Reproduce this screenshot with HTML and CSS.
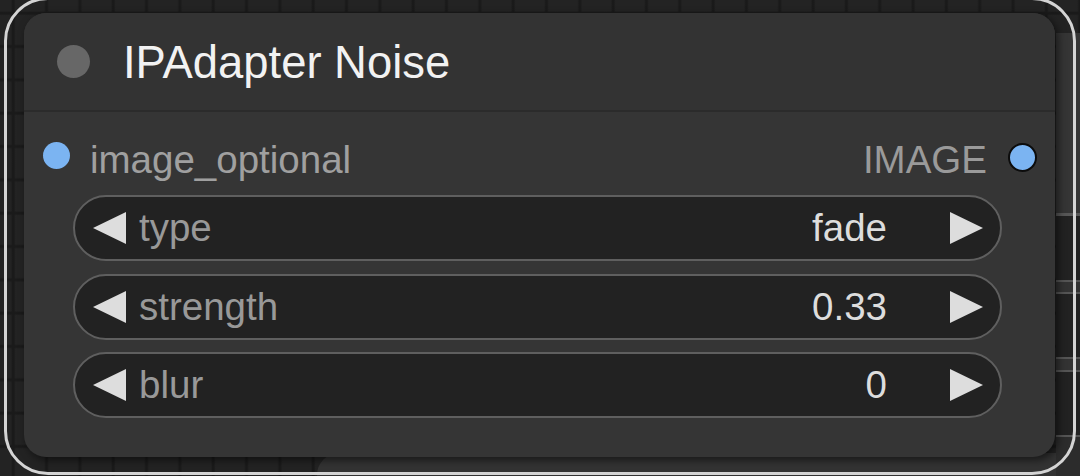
FILE: index.html
```html
<!DOCTYPE html>
<html lang="en">
<head>
<meta charset="utf-8">
<title>IPAdapter Noise</title>
<link rel="stylesheet" href="styles.css">
</head>
<body>
<div class="canvas">
  <div class="bg-node bg-node-bottom"></div>
  <div class="bg-node bg-node-right"></div>
  <div class="selection">
    <div class="node">
      <div class="node-title">
        <span class="title-dot"></span>
        <span class="title-text">IPAdapter Noise</span>
      </div>
      <div class="node-body">
        <div class="slot-row">
          <div class="slot slot-in">
            <span class="dot dot-in"></span>
            <span class="slot-label">image_optional</span>
          </div>
          <div class="slot slot-out">
            <span class="slot-label">IMAGE</span>
            <span class="dot dot-out"></span>
          </div>
        </div>
        <div class="widgets">
          <div class="widget">
            <svg class="arrow" viewBox="0 0 33 32"><polygon points="33,0 0,16 33,32"/></svg>
            <span class="w-label">type</span>
            <span class="w-value">fade</span>
            <svg class="arrow arrow-r" viewBox="0 0 33 32"><polygon points="0,0 33,16 0,32"/></svg>
          </div>
          <div class="widget">
            <svg class="arrow" viewBox="0 0 33 32"><polygon points="33,0 0,16 33,32"/></svg>
            <span class="w-label">strength</span>
            <span class="w-value">0.33</span>
            <svg class="arrow arrow-r" viewBox="0 0 33 32"><polygon points="0,0 33,16 0,32"/></svg>
          </div>
          <div class="widget">
            <svg class="arrow" viewBox="0 0 33 32"><polygon points="33,0 0,16 33,32"/></svg>
            <span class="w-label">blur</span>
            <span class="w-value">0</span>
            <svg class="arrow arrow-r" viewBox="0 0 33 32"><polygon points="0,0 33,16 0,32"/></svg>
          </div>
        </div>
      </div>
    </div>
  </div>
</div>
</body>
</html>
```
FILE: styles.css
```css
html, body {
  margin: 0;
  padding: 0;
  width: 1080px;
  height: 476px;
  overflow: hidden;
}

body {
  font-family: "Liberation Sans", Arial, sans-serif;
  background-color: #232323;
  background-image:
    linear-gradient(90deg, transparent 0, #1a1a1a 1.5px, #1a1a1a 3px, transparent 4.5px),
    linear-gradient(180deg, transparent 0, #1a1a1a 1.5px, #1a1a1a 3px, transparent 4.5px);
  background-size: 33.33px 33.33px;
  background-position: 11px 11px;
}

.canvas {
  position: relative;
  width: 1080px;
  height: 476px;
  overflow: hidden;
}

/* other nodes lying behind on the canvas */
.bg-node {
  position: absolute;
  z-index: 0;
}

.bg-node-bottom {
  left: 317px;
  top: 453px;
  width: 760px;
  height: 40px;
  border-radius: 22px 0 0 0;
  background: #333333;
}

.bg-node-right {
  left: 1056px;
  top: 33px;
  width: 24px;
  height: 443px;
  background: linear-gradient(180deg,
    #353535 0, #353535 180px,
    #575757 180px, #575757 183px,
    #222222 183px, #222222 247px,
    #555555 247px, #555555 249px,
    #333333 249px, #333333 259px,
    #555555 259px, #555555 261px,
    #222222 261px, #222222 324px,
    #555555 324px, #555555 326px,
    #333333 326px, #333333 337px,
    #555555 337px, #555555 339px,
    #222222 339px, #222222 402px,
    #555555 402px, #555555 404px,
    #2c2c2c 404px);
}

.selection {
  position: relative;
  z-index: 1;
  box-sizing: border-box;
  width: 1072px;
  height: 478px;
  margin: -3px 0 0 4px;
  padding: 13px 0 0 17px;
  border: 3px solid #d4d4d4;
  border-radius: 44px;
}

.node {
  width: 1031px;
  height: 444px;
  border-radius: 22px;
  background: #353535;
  box-shadow: 3px 3px 8px rgba(0, 0, 0, 0.55);
  overflow: hidden;
}

.node-title {
  display: flex;
  align-items: center;
  box-sizing: border-box;
  height: 99px;
  padding: 2px 0 0 33px;
  background: #333333;
  border-bottom: 2px solid #2b2b2b;
}

.title-dot {
  width: 33px;
  height: 33px;
  border-radius: 50%;
  background: #676767;
  flex: none;
  margin-top: -2px;
}

.title-text {
  margin-left: 33px;
  font-size: 45.4px;
  color: #f2f2f2;
  white-space: nowrap;
}

.slot-row {
  display: flex;
  justify-content: space-between;
  height: 83px;
  padding: 0 18px 0 19px;
}

.slot {
  display: flex;
  align-items: flex-start;
}

.dot {
  flex: none;
  border-radius: 50%;
  background: #7bb4f2;
}

.dot-in {
  width: 27px;
  height: 27px;
  margin-top: 30px;
  margin-right: 20px;
}

.dot-out {
  box-sizing: border-box;
  width: 29px;
  height: 29px;
  margin-top: 30.5px;
  margin-left: 21px;
  border: 2.5px solid #0c0c0c;
}

.slot-label {
  font-size: 38.5px;
  line-height: 38px;
  margin-top: 29px;
  color: #a0a0a0;
  white-space: nowrap;
}

.slot-out .slot-label {
  color: #9a9a9a;
}

.widgets {
  display: flex;
  flex-direction: column;
  gap: 12.5px;
  padding: 0 53px 0 49px;
}

.widget {
  display: flex;
  align-items: center;
  box-sizing: border-box;
  height: 66px;
  padding: 0 17px 0 18px;
  border: 2px solid #5f5f5f;
  border-radius: 33px;
  background: #222222;
  font-size: 38.5px;
  line-height: 62px;
}

.arrow {
  flex: none;
  width: 33px;
  height: 32px;
  fill: #dddddd;
}

.w-label {
  margin-left: 13px;
  color: #999999;
  flex: 1;
  white-space: nowrap;
}

.w-value {
  color: #dddddd;
  white-space: nowrap;
  margin-right: 63px;
}
```
